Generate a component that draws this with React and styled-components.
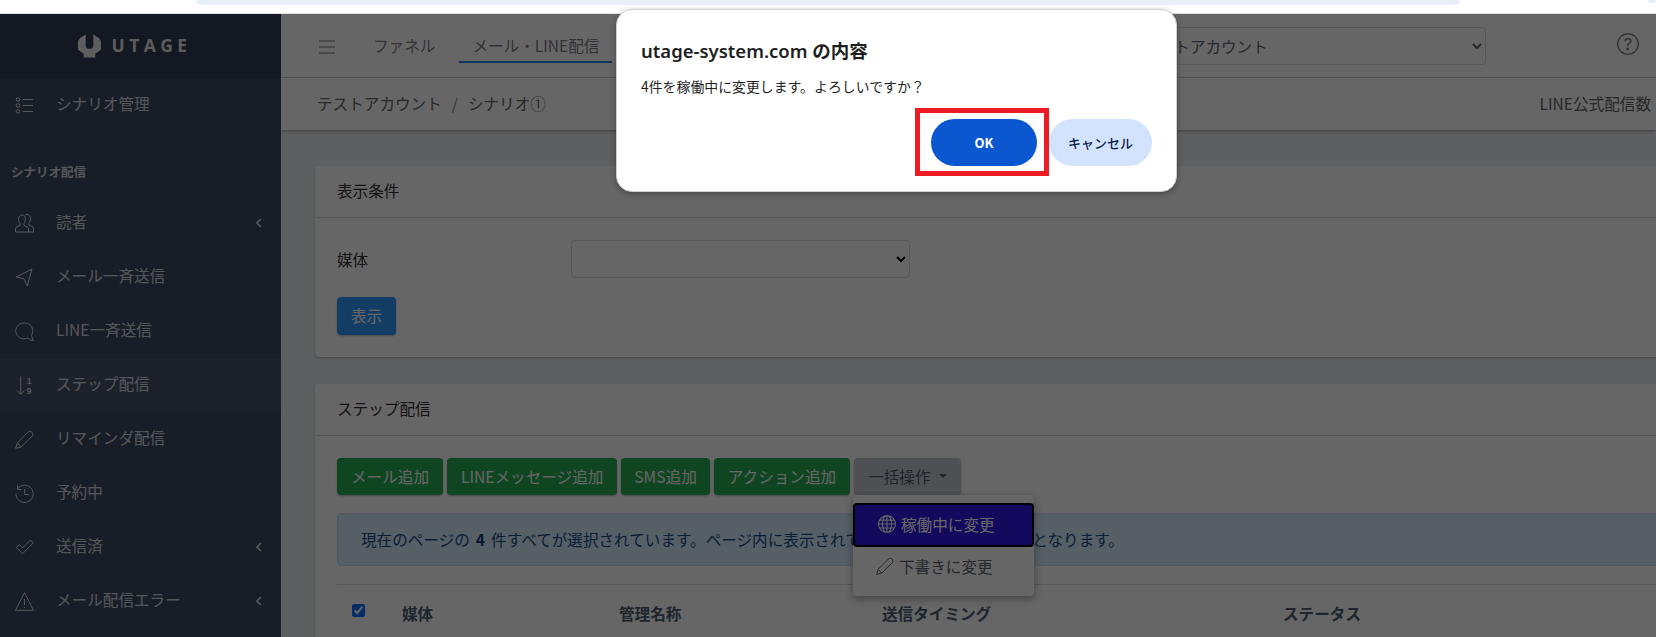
import styled, { createGlobalStyle } from "styled-components";
import { BsGlobe, BsQuestionCircle } from "react-icons/bs";

const GlobalStyle = createGlobalStyle`
  html, body {
    margin: 0;
    padding: 0;
    width: 1656px;
    height: 637px;
    overflow: hidden;
    background: #fff;
    font-family: "Noto Sans CJK JP", "Noto Sans", sans-serif;
    font-size: 15.6px;
    color: #4f5d73;
  }
  * { box-sizing: border-box; }
`;

const Page = styled.div`
  position: relative;
  width: 1656px;
  height: 637px;
  overflow: hidden;
`;

const BrowserStrip = styled.div`
  height: 14px;
  background: #fff;
  border-bottom: 1px solid #e4e4e4;
  padding-left: 196px;
  display: flex;
  align-items: flex-start;
  justify-content: space-between;
`;

const UrlBarEdge = styled.div`
  width: 1264px;
  height: 5px;
  background: #e9eff9;
  border-radius: 0 0 9px 9px;
`;

const CornerEdge = styled.div`
  width: 8px;
  height: 3px;
  background: #e9eff9;
  border-radius: 0 0 0 8px;
`;

const Layout = styled.div`
  display: flex;
  height: 623px;
`;

const Sidebar = styled.aside`
  width: 281px;
  flex-shrink: 0;
  background: #3c4b64;
  color: rgba(255, 255, 255, 0.8);
`;

const Brand = styled.div`
  height: 64px;
  background: #303c55;
  display: flex;
  align-items: center;
  justify-content: center;
  gap: 11px;
  padding: 0 12px 2px 0;
  svg { width: 23px; height: 25px; fill: rgba(255, 255, 255, 0.9); }
`;

const BrandName = styled.span`
  font-family: "Open Sans", sans-serif;
  font-weight: 700;
  font-size: 17.5px;
  letter-spacing: 4.4px;
  line-height: 20px;
  color: rgba(255, 255, 255, 0.9);
`;

const SideRow = styled.div`
  height: 54px;
  display: flex;
  align-items: center;
  padding: 0 19px 0 15px;
  background: ${({ $active }) => ($active ? "#46546c" : "transparent")};
`;

const SideIcon = styled.svg`
  width: 19px;
  height: 19px;
  flex-shrink: 0;
  fill: none;
  stroke: currentColor;
  stroke-width: 1;
  stroke-linejoin: round;
  text {
    fill: currentColor;
    stroke: none;
    font-family: "Liberation Sans", sans-serif;
    font-size: 8.5px;
    font-weight: 700;
  }
`;

const SideLabel = styled.span`
  margin-left: 22px;
  padding-bottom: 5px;
  flex: 1;
`;

const SideHeading = styled.div`
  height: 64px;
  padding: 14px 11px 0;
  display: flex;
  align-items: center;
  font-size: 12.5px;
  font-weight: 700;
`;

const Chevron = styled.svg`
  width: 6px;
  height: 10px;
  fill: none;
  stroke: currentColor;
  stroke-width: 1.6;
`;

const Main = styled.main`
  flex: 1;
  min-width: 0;
  background: #ebedef;
  overflow: hidden;
`;

const TopNav = styled.div`
  height: 64px;
  background: #fff;
  border-bottom: 1px solid #d8dbe0;
  display: flex;
  align-items: center;
  padding: 0 17px 0 38px;
`;

const Burger = styled.svg`
  width: 16px;
  height: 16px;
  margin: 2px 25px 0 0;
  stroke: #777;
  stroke-width: 1.2;
  fill: none;
`;

const Tab = styled.div`
  height: 34px;
  padding: 0 13px;
  display: flex;
  align-items: center;
  margin-right: 11px;
  color: #80808a;
  border-bottom: 2px solid ${({ $active }) => ($active ? "#2e86e0" : "transparent")};
  white-space: nowrap;
`;

const AccountSelect = styled.select`
  margin-left: auto;
  width: 356px;
  height: 38px;
  padding: 0 8px;
  font: inherit;
  color: #5c6873;
  background: #fff;
  border: 1px solid #d8dbe0;
  border-radius: 4px;
`;

const HelpIcon = styled(BsQuestionCircle)`
  width: 22px;
  height: 22px;
  margin: 0 0 3px 131px;
  color: #888;
`;

const Crumbs = styled.div`
  height: 52px;
  background: #fff;
  display: flex;
  align-items: center;
  justify-content: space-between;
  padding: 0 5px 3px 36px;
  color: #666;
  box-shadow: 0 1px 3px rgba(0, 0, 0, 0.35);
  position: relative;
`;

const CrumbSep = styled.span`
  margin: 0 10px;
  color: #888;
`;

const Content = styled.div`
  padding: 36px 0 0 34px;
  display: flex;
  flex-direction: column;
  gap: 27px;
`;

const Card = styled.section`
  width: 1420px;
  background: #fff;
  border-radius: 4px;
  box-shadow: 0 1px 2px rgba(0, 0, 0, 0.25);
`;

const CardHead = styled.div`
  height: 52px;
  border-bottom: 1px solid #d8dbe0;
  display: flex;
  align-items: center;
  padding: 0 22px 3px;
  color: #333;
`;

const CardBody = styled.div`
  padding: 22px;
`;

const FieldRow = styled.div`
  display: grid;
  grid-template-columns: 234px 339px;
  align-items: center;
  color: #333;
  margin-bottom: 19px;
`;

const PlainSelect = styled.select`
  height: 38px;
  font: inherit;
  background: #fff;
  border: 1px solid #d8dbe0;
  border-radius: 4px;
`;

const Btn = styled.button`
  height: ${({ $short }) => ($short ? "38px" : "37px")};
  padding: 0 ${({ $pad }) => $pad || 14}px 2px;
  font: inherit;
  color: ${({ $tone }) => ($tone === "grey" ? "#4f5d73" : "#fff")};
  border: 0;
  border-radius: 4px;
  white-space: nowrap;
  background: ${({ $tone }) =>
    $tone === "blue" ? "#3399ff" : $tone === "grey" ? "#c4c9d0" : "#2aac55"};
  box-shadow: 0 1px 2px rgba(0, 0, 0, 0.3);
  display: inline-flex;
  align-items: center;
`;

const Toolbar = styled.div`
  display: flex;
  gap: 4px;
  position: relative;
`;

const Caret = styled.span`
  margin-left: 8px;
  border-top: 4px solid currentColor;
  border-left: 4px solid transparent;
  border-right: 4px solid transparent;
`;

const BulkMenu = styled.div`
  position: absolute;
  left: 516px;
  top: 37px;
  width: 181px;
  height: 101px;
  padding-top: 8px;
  background: #fff;
  border-radius: 4px;
  box-shadow: 0 3px 8px rgba(0, 0, 0, 0.35);
  z-index: 2;
`;

const MenuItem = styled.div`
  height: ${({ $active }) => ($active ? "44px" : "40px")};
  display: flex;
  align-items: center;
  gap: 5px;
  padding: 0 0 2px 23px;
  color: ${({ $active }) => ($active ? "#fff" : "#5c6873")};
  background: ${({ $active }) => ($active ? "#3219e8" : "transparent")};
  border: ${({ $active }) => ($active ? "2px solid #000" : "0")};
  border-radius: ${({ $active }) => ($active ? "4px" : "0")};
  svg { width: 18px; height: 18px; flex-shrink: 0; }
`;

const Notice = styled.div`
  height: 53px;
  margin-top: 18px;
  padding: 0 23px 2px;
  display: flex;
  align-items: center;
  background: #d6ebff;
  border: 1px solid #c6e2ff;
  border-radius: 4px;
  color: #1b4f85;
  white-space: nowrap;
  b { margin: 0 6px; color: #123f70; }
`;

const TableHead = styled.div`
  margin-top: 18px;
  border-top: 1px solid #d8dbe0;
  display: grid;
  grid-template-columns: 65px 217px 263px 401px 1fr;
  align-items: center;
  height: 60px;
  padding-bottom: 3px;
  font-weight: 700;
  color: #4f5d73;
`;

const HeadCheck = styled.input`
  width: 13px;
  height: 13px;
  margin: 0 0 6px 15px;
  accent-color: #0d6efd;
`;

const Scrim = styled.div`
  position: absolute;
  left: 0;
  top: 14px;
  right: 0;
  bottom: 0;
  background: rgba(0, 0, 0, 0.6);
  z-index: 5;
`;

const Dialog = styled.div`
  position: absolute;
  left: 616px;
  top: 9px;
  width: 561px;
  height: 183px;
  background: #fff;
  border: 1px solid #cfcfcf;
  border-radius: 16px;
  box-shadow: 0 2px 6px rgba(0, 0, 0, 0.3);
  padding: 28px 24px 0;
  z-index: 6;
`;

const DialogTitle = styled.div`
  font-family: "Noto Sans", "Noto Sans CJK JP", sans-serif;
  font-size: 18.5px;
  font-weight: 600;
  line-height: 26px;
  color: #1f1f1f;
`;

const DialogText = styled.div`
  margin-top: 12px;
  font-size: 13.9px;
  line-height: 20px;
  color: #1f1f1f;
`;

const DialogActions = styled.div`
  position: absolute;
  left: 314px;
  top: 109px;
  display: flex;
  gap: 12px;
`;

const Pill = styled.button`
  height: 47px;
  width: ${({ $primary }) => ($primary ? "106px" : "103px")};
  padding: 0;
  border: 0;
  border-radius: 24px;
  font-family: "Noto Sans CJK JP", sans-serif;
  font-size: 13px;
  font-weight: ${({ $primary }) => ($primary ? 700 : 500)};
  color: ${({ $primary }) => ($primary ? "#fff" : "#0b1d4a")};
  background: ${({ $primary }) => ($primary ? "#0b57d0" : "#d3e3fd")};
`;

const RedMark = styled.div`
  position: absolute;
  left: 298px;
  top: 98px;
  width: 134px;
  height: 68px;
  border: 5px solid #ed1c24;
  pointer-events: none;
`;

const LogoMark = () => (
  <svg viewBox="0 0 24 25">
    <path d="M8 1 L2 5 L0 8 V17 L6 21 V25 H18 V21 L24 17 V8 L22 5 L16 1 V13 C16 17 8 17 8 13 Z" />
  </svg>
);

const ListIcon = () => (
  <SideIcon viewBox="0 0 19 19">
    <circle cx="3" cy="3.5" r="1.8" />
    <circle cx="3" cy="9.5" r="1.8" />
    <circle cx="3" cy="15.5" r="1.8" />
    <path d="M7.5 3.5H18M7.5 9.5H18M7.5 15.5H18" />
  </SideIcon>
);

const PeopleIcon = () => (
  <SideIcon viewBox="0 0 19 19">
    <path d="M7 1C4.8 1 3.5 2.8 3.5 5C3.5 7 4.2 8.7 5.2 9.8V11.3L1 13.3C.6 13.5.5 13.9.5 14.4V18H13.5V14.4C13.5 13.9 13.4 13.5 13 13.3L8.8 11.3V9.8C9.8 8.7 10.5 7 10.5 5C10.5 2.8 9.2 1 7 1Z" />
    <path d="M10 1.2C10.6.7 11.3.5 12 .5C14.2.5 15.5 2.4 15.5 4.6C15.5 6.6 14.8 8.3 13.8 9.4V10.9L18 12.9C18.4 13.1 18.5 13.5 18.5 14V18H13.5" />
  </SideIcon>
);

const SendIcon = () => (
  <SideIcon viewBox="0 0 19 19">
    <path d="M17 1L1.3 9L9 10.7L12.3 18Z" />
  </SideIcon>
);

const ChatIcon = () => (
  <SideIcon viewBox="0 0 19 19">
    <path d="M13 16C11.9 16.5 10.7 16.8 9.3 16.8C4.6 16.8 .8 13.5 .8 8.9C.8 4.3 4.6 1 9.3 1C14 1 17.8 4.3 17.8 8.9C17.8 10.4 17.4 11.8 16.7 13C16.8 15 17.3 16.8 18.6 18.6C16.5 18.6 14.5 17.8 13 16Z" />
  </SideIcon>
);

const SortIcon = () => (
  <SideIcon viewBox="0 0 19 19">
    <path d="M5.7 .5V18M2 14.5L5.7 18.3L9.4 14.5" />
    <text x="11.8" y="8">1</text>
    <text x="11.8" y="17.5">9</text>
  </SideIcon>
);

const PencilIcon = () => (
  <SideIcon viewBox="0 0 19 19">
    <path d="M.7 18.3L2.2 13L13 2.2C14.1 1.1 15.9 1.1 17 2.2C18.1 3.3 18.1 5.1 17 6.2L6.2 17Z" />
    <path d="M2.2 13L6.2 17" />
  </SideIcon>
);

const HistoryIcon = () => (
  <SideIcon viewBox="0 0 19 19">
    <path d="M2.5 5A8.6 8.6 0 1 1 1 9.7" />
    <path d="M2.5 1.5V5.5H6.5M9.7 5V10.5H14" />
  </SideIcon>
);

const CheckIcon = () => (
  <SideIcon viewBox="0 0 19 19">
    <path d="M1.3 9.5L4.3 6.5L7.5 10L15.5 2L18.2 5L7.5 15.8Z" />
  </SideIcon>
);

const WarnIcon = () => (
  <SideIcon viewBox="0 0 19 19">
    <path d="M9.5 .7L18.5 18.3H.5Z" />
    <path d="M9.5 7V13M9.5 15V16" />
  </SideIcon>
);

const Back = () => (
  <Chevron viewBox="0 0 6 10">
    <path d="M5 1 L1 5 L5 9" />
  </Chevron>
);

const sideItems = [
  { label: "読者", Icon: PeopleIcon, more: true },
  { label: "メール一斉送信", Icon: SendIcon },
  { label: "LINE一斉送信", Icon: ChatIcon },
  { label: "ステップ配信", Icon: SortIcon, active: true },
  { label: "リマインダ配信", Icon: PencilIcon },
  { label: "予約中", Icon: HistoryIcon },
  { label: "送信済", Icon: CheckIcon, more: true },
  { label: "メール配信エラー", Icon: WarnIcon, more: true },
];

const App = () => {
  return (
    <Page>
      <GlobalStyle />
      <BrowserStrip>
        <UrlBarEdge />
        <CornerEdge />
      </BrowserStrip>
      <Layout>
        <Sidebar>
          <Brand>
            <LogoMark />
            <BrandName>UTAGE</BrandName>
          </Brand>
          <SideRow>
            <ListIcon />
            <SideLabel>シナリオ管理</SideLabel>
          </SideRow>
          <SideHeading>シナリオ配信</SideHeading>
          {sideItems.map(({ label, Icon, more, active }) => (
            <SideRow key={label} $active={active}>
              <Icon />
              <SideLabel>{label}</SideLabel>
              {more && <Back />}
            </SideRow>
          ))}
        </Sidebar>
        <Main>
          <TopNav>
            <Burger viewBox="0 0 16 16">
              <path d="M0 2H16M0 8H16M0 14H16" />
            </Burger>
            <Tab>ファネル</Tab>
            <Tab $active>メール・LINE配信</Tab>
            <AccountSelect defaultValue="a">
              <option value="a">テストアカウント</option>
            </AccountSelect>
            <HelpIcon />
          </TopNav>
          <Crumbs>
            <span>
              テストアカウント<CrumbSep>/</CrumbSep>シナリオ①
            </span>
            <span>LINE公式配信数</span>
          </Crumbs>
          <Content>
            <Card>
              <CardHead>表示条件</CardHead>
              <CardBody>
                <FieldRow>
                  <span>媒体</span>
                  <PlainSelect />
                </FieldRow>
                <Btn $tone="blue" $short>
                  表示
                </Btn>
              </CardBody>
            </Card>
            <Card>
              <CardHead>ステップ配信</CardHead>
              <CardBody>
                <Toolbar>
                  <Btn>メール追加</Btn>
                  <Btn>LINEメッセージ追加</Btn>
                  <Btn $pad={13}>SMS追加</Btn>
                  <Btn>アクション追加</Btn>
                  <Btn $tone="grey">
                    一括操作
                    <Caret />
                  </Btn>
                  <BulkMenu>
                    <MenuItem $active>
                      <BsGlobe />
                      稼働中に変更
                    </MenuItem>
                    <MenuItem>
                      <PencilIcon />
                      下書きに変更
                    </MenuItem>
                  </BulkMenu>
                </Toolbar>
                <Notice>
                  現在のページの<b>4</b>件すべてが選択されています。ページ内に表示されている項目のみが処理対象となります。
                </Notice>
                <TableHead>
                  <HeadCheck type="checkbox" defaultChecked />
                  <span>媒体</span>
                  <span>管理名称</span>
                  <span>送信タイミング</span>
                  <span>ステータス</span>
                </TableHead>
              </CardBody>
            </Card>
          </Content>
        </Main>
      </Layout>
      <Scrim />
      <Dialog>
        <DialogTitle>utage-system.com の内容</DialogTitle>
        <DialogText>4件を稼働中に変更します。よろしいですか？</DialogText>
        <DialogActions>
          <Pill $primary>OK</Pill>
          <Pill>キャンセル</Pill>
        </DialogActions>
        <RedMark />
      </Dialog>
    </Page>
  );
};

export default App;
